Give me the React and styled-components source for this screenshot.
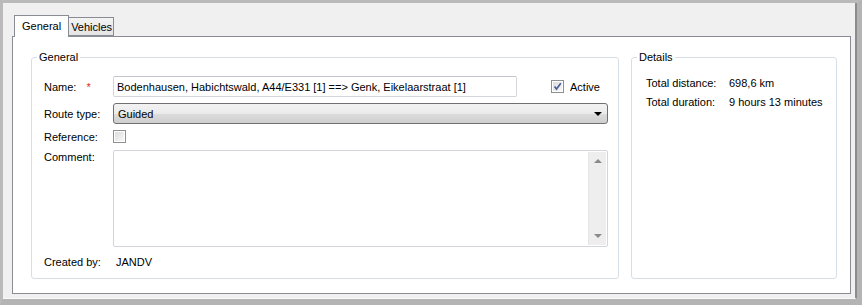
import React from 'react';
import styled, { createGlobalStyle } from 'styled-components';

const GlobalStyle = createGlobalStyle`
    html, body {
        margin: 0;
        padding: 0;
        background: #b9b9b9;
    }
    body {
        font-family: 'Liberation Sans', Arial, sans-serif;
        font-size: 11px;
        color: #000000;
    }
`

// Window frame <BEGIN>
export const Window = styled.div`
    width: 862px;
    height: 305px;
    box-sizing: border-box;
    border-top: 3px solid #bababa;
    border-left: 3px solid #bababa;
    border-right: 5px solid #b4b4b4;
    border-bottom: 6px solid #b4b4b4;
    background: #f0f0f0;
`

export const Inner = styled.div`
    height: 100%;
    box-sizing: border-box;
    border-right: 2px solid #8c8c8c;
    border-bottom: 1px solid #fafafa;
    padding: 12px 0 0 9px;
    display: flex;
    flex-direction: column;
`

export const TabStrip = styled.div`
    display: flex;
    align-items: flex-end;
    height: 21px;
    margin-left: 2px;
    position: relative;
    z-index: 1;
`

export const Tab = styled.div`
    box-sizing: border-box;
    height: ${p => (p.$active ? '22px' : '19px')};
    margin-bottom: ${p => (p.$active ? '-1px' : '0')};
    padding: ${p => (p.$active ? '3px 7px 0 7px' : '2px 1px 0 2px')};
    border: 1px solid #898c95;
    border-bottom: ${p => (p.$active ? 'none' : '1px solid #898c95')};
    border-left: ${p => (p.$active ? '1px solid #898c95' : 'none')};
    background: ${p => (p.$active ? '#ffffff' : 'linear-gradient(#f3f3f3, #e4e4e4)')};
    font-size: 11px;
    line-height: 14px;
`

export const Panel = styled.div`
    width: 839px;
    height: 258px;
    box-sizing: border-box;
    border: 1px solid #898c95;
    background: #ffffff;
    padding: 14px 0 0 18px;
    display: flex;
    gap: 12px;
`
// <END>

// Group boxes <BEGIN>
export const Group = styled.fieldset`
    box-sizing: border-box;
    width: ${p => p.$width}px;
    height: 228px;
    margin: 0;
    padding: 0;
    border: 1px solid #d5dfe5;
    border-radius: 3px;
    min-width: 0;
`

export const Legend = styled.legend`
    margin-left: 5px;
    padding: 0 2px;
    font-size: 11px;
    line-height: 13px;
`

export const FormGrid = styled.div`
    display: grid;
    grid-template-columns: 69px 1fr;
    grid-template-rows: 21px 21px 14px 97px 18px;
    row-gap: 6px;
    padding: 12px 10px 0 12px;
`

export const Label = styled.div`
    display: flex;
    align-items: ${p => (p.$top ? 'flex-start' : 'center')};
    padding-top: ${p => (p.$top ? '1px' : '0')};
    white-space: nowrap;
`

export const Required = styled.span`
    color: #e2262b;
    margin-left: 10px;
`

export const Row = styled.div`
    display: flex;
    align-items: ${p => (p.$top ? 'flex-start' : 'center')};
`

export const TextBox = styled.div`
    box-sizing: border-box;
    width: 404px;
    height: 21px;
    border: 1px solid #d2d5da;
    border-top-color: #c3c6cb;
    border-radius: 2px;
    padding: 0 3px;
    display: flex;
    align-items: center;
    white-space: nowrap;
`

export const CheckLabel = styled.label`
    margin-left: auto;
    margin-right: 8px;
    display: flex;
    align-items: center;
    gap: 6px;
`

export const Box = styled.span`
    box-sizing: border-box;
    width: 13px;
    height: 13px;
    border: 1px solid #8e8f8f;
    background: #ffffff;
    padding: 1px;
    display: flex;
`

export const BoxFill = styled.span`
    flex: 1;
    background: linear-gradient(135deg, #dcdcdc, #f8f8f8);
    position: relative;
`

export const Select = styled.div`
    box-sizing: border-box;
    height: 21px;
    border: 1px solid #707070;
    border-radius: 3px;
    background: linear-gradient(#f2f2f2 0%, #ebebeb 50%, #dddddd 51%, #cfcfcf 100%);
    padding: 0 4px;
    display: flex;
    align-items: center;
    justify-content: space-between;
`

export const Caret = styled.span`
    width: 0;
    height: 0;
    border-left: 4px solid transparent;
    border-right: 4px solid transparent;
    border-top: 4px solid #000000;
    margin-right: 1px;
`

export const Memo = styled.div`
    box-sizing: border-box;
    border: 1px solid #d2d5da;
    border-radius: 2px;
    display: flex;
    justify-content: flex-end;
    padding: 1px;
`

export const ScrollBar = styled.div`
    width: 17px;
    background: #eeeeee;
    border-left: 1px solid #e4e4e4;
    display: flex;
    flex-direction: column;
    justify-content: space-between;
    align-items: center;
    padding: 7px 0;
`

export const Arrow = styled.span`
    width: 0;
    height: 0;
    border-left: 4px solid transparent;
    border-right: 4px solid transparent;
    border-${p => (p.$up ? 'bottom' : 'top')}: 4px solid #8a8a8a;
`

export const Value = styled.div`
    display: flex;
    align-items: center;
    padding-left: 3px;
`

export const DetailGrid = styled.div`
    display: grid;
    grid-template-columns: 83px auto;
    row-gap: 5px;
    padding: 12px 0 0 14px;
    line-height: 14px;
`
// <END>

function CheckBox({ checked }) {
    return (
        <Box>
            <BoxFill>
                {checked && (
                    <svg width="9" height="9" viewBox="0 0 9 9" style={{ position: 'absolute', left: 0, top: 0 }}>
                        <path d="M1.5 4.5 L3.5 7 L7.8 1.2" fill="none" stroke="#4b5f9a" strokeWidth="1.7" />
                    </svg>
                )}
            </BoxFill>
        </Box>
    );
}

export default function App() {
    return (
        <>
            <GlobalStyle />
            <Window>
                <Inner>
                    <TabStrip>
                        <Tab $active>General</Tab>
                        <Tab>Vehicles</Tab>
                    </TabStrip>
                    <Panel>
                        <Group $width={588}>
                            <Legend>General</Legend>
                            <FormGrid>
                                <Label>Name:<Required>*</Required></Label>
                                <Row>
                                    <TextBox>Bodenhausen, Habichtswald, A44/E331 [1] ==&gt; Genk, Eikelaarstraat [1]</TextBox>
                                    <CheckLabel><CheckBox checked />Active</CheckLabel>
                                </Row>

                                <Label>Route type:</Label>
                                <Select>Guided<Caret /></Select>

                                <Label>Reference:</Label>
                                <Row $top><CheckBox /></Row>

                                <Label $top>Comment:</Label>
                                <Memo>
                                    <ScrollBar>
                                        <Arrow $up />
                                        <Arrow />
                                    </ScrollBar>
                                </Memo>

                                <Label>Created by:</Label>
                                <Value>JANDV</Value>
                            </FormGrid>
                        </Group>
                        <Group $width={206}>
                            <Legend>Details</Legend>
                            <DetailGrid>
                                <div>Total distance:</div>
                                <div>698,6 km</div>
                                <div>Total duration:</div>
                                <div>9 hours 13 minutes</div>
                            </DetailGrid>
                        </Group>
                    </Panel>
                </Inner>
            </Window>
        </>
    );
}
